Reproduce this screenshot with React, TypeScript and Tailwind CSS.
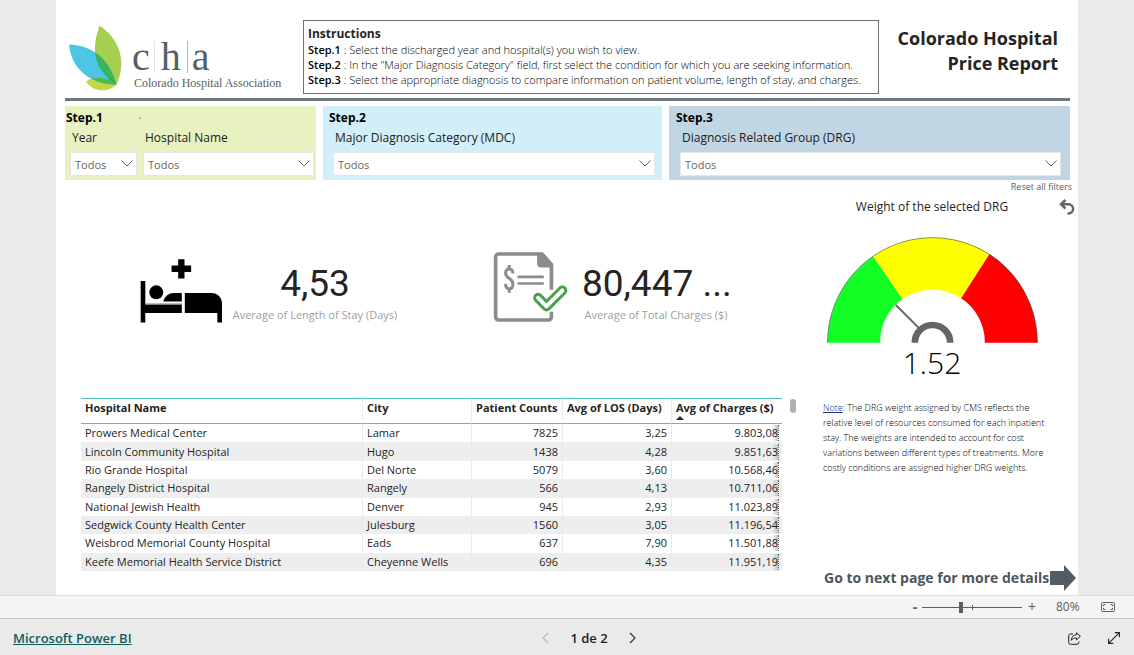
import { useState } from 'react';

interface HospitalRow {
  name: string;
  city: string;
  patients: string;
  los: string;
  charges: string;
}

const ROWS: HospitalRow[] = [
  { name: 'Prowers Medical Center', city: 'Lamar', patients: '7825', los: '3,25', charges: '9.803,08' },
  { name: 'Lincoln Community Hospital', city: 'Hugo', patients: '1438', los: '4,28', charges: '9.851,63' },
  { name: 'Rio Grande Hospital', city: 'Del Norte', patients: '5079', los: '3,60', charges: '10.568,46' },
  { name: 'Rangely District Hospital', city: 'Rangely', patients: '566', los: '4,13', charges: '10.711,06' },
  { name: 'National Jewish Health', city: 'Denver', patients: '945', los: '2,93', charges: '11.023,89' },
  { name: 'Sedgwick County Health Center', city: 'Julesburg', patients: '1560', los: '3,05', charges: '11.196,54' },
  { name: 'Weisbrod Memorial County Hospital', city: 'Eads', patients: '637', los: '7,90', charges: '11.501,88' },
  { name: 'Keefe Memorial Health Service District', city: 'Cheyenne Wells', patients: '696', los: '4,35', charges: '11.951,19' },
];

const STEPS = [
  { label: 'Step.1', text: 'Select the discharged year and hospital(s) you wish to view.' },
  { label: 'Step.2', text: 'In the "Major Diagnosis Category" field, first select the condition for which you are seeking information.' },
  { label: 'Step.3', text: 'Select the appropriate diagnosis to compare information on patient volume, length of stay, and charges.' },
];

function LeafLogo() {
  return (
    <svg viewBox="38 42 160 200" className="h-[66px] w-[53px] shrink-0" aria-hidden="true">
      <defs>
        <clipPath id="green-leaf">
          <path d="M130 44C182 76 218 146 181 224C108 172 106 112 130 44Z" />
        </clipPath>
        <clipPath id="blue-leaf">
          <path d="M38 101C108 103 162 146 181 223C108 222 44 180 38 101Z" />
        </clipPath>
      </defs>
      <path d="M130 44C182 76 218 146 181 224C108 172 106 112 130 44Z" fill="#a5cf4f" />
      <path d="M89 213C112 197 158 200 181 223C160 246 112 248 89 213Z" fill="#c0d945" />
      <path d="M38 101C108 103 162 146 181 223C108 222 44 180 38 101Z" fill="#4cc5e6" />
      <g clipPath="url(#blue-leaf)">
        <path d="M130 44C182 76 218 146 181 224C108 172 106 112 130 44Z" fill="#3bb558" />
        <path d="M89 213C112 197 158 200 181 223C160 246 112 248 89 213Z" fill="#52b848" />
      </g>
      <g clipPath="url(#green-leaf)">
        <path d="M150 203Q168 208 181 223Q172 200 150 203Z" fill="#2fa64a" />
      </g>
    </svg>
  );
}

function BedIcon() {
  return (
    <svg viewBox="31 55 250 195" className="h-[65px] w-[83px] shrink-0" aria-hidden="true">
      <path d="M146 58h19v19h20v20h-20v19h-19V97h-20V77h20z" />
      <circle cx="80" cy="158" r="21" />
      <path d="M33 124h14v71h110v25H47v29H33z" />
      <path d="M101 186Q108 160 134 160H157V186Z" />
      <path d="M166 160h82a30 30 0 0 1 30 30v59h-14v-29h-98z" />
      <path d="M47 192h110" stroke="#8a8a8a" strokeWidth="2" />
    </svg>
  );
}

function ChargesIcon() {
  return (
    <svg viewBox="38 34 226 215" className="h-[72px] w-[75px] shrink-0" fill="none" aria-hidden="true">
      <path d="M214 216v16a9 9 0 0 1-9 9H55a9 9 0 0 1-9-9V51a9 9 0 0 1 9-9h130l29 32v76" stroke="#8c8c8c" strokeWidth="11" />
      <path d="M171 38h18l30 34v11h-36q-12 0-12-12z" fill="#8c8c8c" />
      <path d="M112 111h79M112 131h79" stroke="#8c8c8c" strokeWidth="8" />
      <path
        d="M98 101c0-10-5-14-11-14s-11 4-11 13c0 17 22 14 22 33 0 9-5 14-11 14s-11-5-11-15M87 75v12M87 147v12"
        stroke="#8c8c8c"
        strokeWidth="9"
      />
      <path d="M174 174l25 26 48-48" stroke="#fff" strokeWidth="38" strokeLinecap="round" strokeLinejoin="round" />
      <path d="M174 174l25 26 48-48" stroke="#46a24a" strokeWidth="30" strokeLinecap="round" strokeLinejoin="round" />
      <path d="M174 174l25 26 48-48" stroke="#fff" strokeWidth="12" strokeLinecap="round" strokeLinejoin="round" />
    </svg>
  );
}

function Gauge() {
  return (
    <svg viewBox="50 36 632 318" className="h-[106px] w-[211px]" role="img" aria-label="Weight of the selected DRG: 1.52">
      <path d="M51 353A315 315 0 0 1 188 94L276 222A157 157 0 0 0 209 353Z" fill="#12ff26" />
      <path d="M188 94A315 315 0 0 1 537 87L452 220A157 157 0 0 0 276 222Z" fill="#ffff00" />
      <path d="M537 87A315 315 0 0 1 681 353H523A157 157 0 0 0 452 220Z" fill="#ff0000" />
      <path d="M51 353A315 315 0 0 1 681 353" fill="none" stroke="#555" strokeWidth="2" />
      <path d="M256 240L324 308" stroke="#666" strokeWidth="6" />
      <path d="M313 353A53 53 0 0 1 419 353" fill="none" stroke="#666" strokeWidth="20" />
    </svg>
  );
}

interface FilterSelectProps {
  id: string;
  label: string;
  className?: string;
}

function FilterSelect({ id, label, className }: FilterSelectProps) {
  return (
    <div className={className}>
      <label htmlFor={id} className="block pl-0.5 text-[12px] leading-4 whitespace-nowrap text-[#1c1c1c]">
        {label}
      </label>
      <div className="relative mt-1.5">
        <select
          id={id}
          className="block h-6 w-full appearance-none border border-[#e6e6e6] bg-white pt-0.5 pl-1 text-[11px] text-[#666]"
        >
          <option>Todos</option>
        </select>
        <svg viewBox="0 0 12 7" className="pointer-events-none absolute top-2 right-1 h-[7px] w-3" fill="none" stroke="#666">
          <path d="M.5.5L6 6 11.5.5" />
        </svg>
      </div>
    </div>
  );
}

export default function App() {
  const [zoom, setZoom] = useState(80);

  return (
    <div className="flex min-h-screen flex-col bg-[#eaeaea] font-['Open_Sans',sans-serif] text-[#252423]">
      <main className="mx-auto flex w-full max-w-[1022px] grow flex-col bg-white">
        <header className="mr-2 ml-[9px] flex border-b-[3px] border-[#6f787d] pt-5 pb-1 pl-1">
          <div className="flex w-[234px] shrink-0 gap-2.5 pt-[5px]">
            <LeafLogo />
            <div className="font-['Liberation_Serif',serif] text-[#565f66]">
              <div className="flex h-12 items-end text-[40px] leading-8">
                <span>c</span>
                <span className="mx-1 h-8 w-px bg-[#e4e6e7]" />
                <span className="px-0.5">h</span>
                <span className="mx-1 h-8 w-px bg-[#b4b8bb]" />
                <span>a</span>
              </div>
              <div className="pl-0.5 text-[12px] leading-[21px] whitespace-nowrap">Colorado Hospital Association</div>
            </div>
          </div>
          <section className="h-[74px] grow border border-[#6b7378] px-1 pt-1">
            <h2 className="text-[12px] leading-[17px] font-bold">Instructions</h2>
            {STEPS.map((s) => (
              <p key={s.label} className="text-[11px] leading-[15px] font-light text-black">
                <b className="font-semibold">{s.label}</b> : {s.text}
              </p>
            ))}
          </section>
          <h1 className="w-[191px] shrink-0 pt-1.5 pr-3 text-right text-[18px] leading-[25px] font-bold">
            Colorado Hospital
            <br />
            Price Report
          </h1>
        </header>

        <section className="mt-[5px] mr-2 ml-[9px] grid grid-cols-[251fr_339fr_401fr] gap-[7px] text-black">
          <div className="bg-[#e8f2c0] pt-1 pb-1">
            <div className="flex items-center pl-px text-[12px] leading-4 font-bold">
              Step.1
              <span className="ml-9 h-0.5 w-0.5 bg-[#a5cf4f]" />
            </div>
            <div className="mt-1 flex gap-1.5 pr-0.5 pl-[5px]">
              <FilterSelect id="year" label="Year" className="w-[67px]" />
              <FilterSelect id="hospital" label="Hospital Name" className="grow" />
            </div>
          </div>
          <div className="bg-[#d2eef9] pt-1 pb-1">
            <div className="pl-1.5 text-[12px] leading-4 font-bold">Step.2</div>
            <FilterSelect id="mdc" label="Major Diagnosis Category (MDC)" className="mt-1 mr-[7px] ml-2.5" />
          </div>
          <div className="bg-[#c0d6e4] pt-1 pb-1">
            <div className="pl-[7px] text-[12px] leading-4 font-bold">Step.3</div>
            <FilterSelect id="drg" label="Diagnosis Related Group (DRG)" className="mt-1 mr-[9px] ml-[11px]" />
          </div>
        </section>

        <div className="flex grow">
          <section className="grow pl-[25px]">
            <div className="flex items-end pt-[71px] pl-[59px]">
              <BedIcon />
              <div className="ml-2 w-[168px] text-center">
                <div className="font-[Roboto,sans-serif] text-[37px] leading-[46px]">4,53</div>
                <div className="text-[11px] leading-4 whitespace-nowrap text-[#a0a0a0]">Average of Length of Stay (Days)</div>
              </div>
              <div className="ml-[94px]">
                <ChargesIcon />
              </div>
              <div className="ml-3.5 w-[148px] text-center">
                <div className="font-[Roboto,sans-serif] text-[37px] leading-[46px] whitespace-nowrap">80,447 ...</div>
                <div className="text-[11px] leading-4 whitespace-nowrap text-[#a0a0a0]">Average of Total Charges ($)</div>
              </div>
            </div>

            <div className="mt-[75px] flex gap-2">
              <table className="h-[173px] w-[701px] table-fixed border-separate border-spacing-0 text-[11px] leading-4">
                <colgroup>
                  <col className="w-[282px]" />
                  <col className="w-[109px]" />
                  <col className="w-[91px]" />
                  <col className="w-[109px]" />
                  <col />
                </colgroup>
                <thead>
                  <tr className="h-[26px] text-left align-top whitespace-nowrap">
                    <th className="border-y border-r border-y-[#4bc4bc] border-r-[#eaeaea] px-1 pt-px font-bold">Hospital Name</th>
                    <th className="border-y border-r border-y-[#4bc4bc] border-r-[#eaeaea] px-1 pt-px font-bold">City</th>
                    <th className="border-y border-r border-y-[#4bc4bc] border-r-[#eaeaea] px-1 pt-px font-bold">Patient Counts</th>
                    <th className="border-y border-r border-y-[#4bc4bc] border-r-[#eaeaea] px-1 pt-px font-bold">Avg of LOS (Days)</th>
                    <th className="border-y border-y-[#4bc4bc] px-1 pt-px font-bold" aria-sort="ascending">
                      Avg of Charges ($)
                      <svg viewBox="0 0 8 4" className="h-1 w-2" fill="#252423">
                        <path d="M0 4L4 0 8 4Z" />
                      </svg>
                    </th>
                  </tr>
                </thead>
                <tbody>
                  {ROWS.map((row) => (
                    <tr key={row.name} className="even:bg-[#eeeeee]">
                      <td className="border-r border-[#eaeaea] px-1">{row.name}</td>
                      <td className="border-r border-[#eaeaea] px-1">{row.city}</td>
                      <td className="border-r border-[#eaeaea] px-1 text-right">{row.patients}</td>
                      <td className="border-r border-[#eaeaea] px-1 text-right">{row.los}</td>
                      <td className="pr-[3px] text-right">
                        <span className="inline-block border-r border-dotted border-[#666] bg-linear-to-l from-[#bfc4c6] from-0% to-transparent to-[6px]">
                          {row.charges}
                        </span>
                      </td>
                    </tr>
                  ))}
                </tbody>
              </table>
              <div className="mt-px h-3.5 w-1.5 rounded-full bg-[#b3b0ad]" />
            </div>
          </section>

          <aside className="flex w-[255px] shrink-0 flex-col">
            <button type="button" className="mr-1.5 self-end text-[9px] leading-[14px] text-[#55605f]">
              Reset all filters
            </button>
            <div className="mt-1 flex items-center">
              <h2 className="w-[218px] text-center text-[12px] leading-[18px]">Weight of the selected DRG</h2>
              <button type="button" aria-label="Back" className="ml-[18px]">
                <svg viewBox="0 0 16 16" className="h-4 w-4" fill="none" stroke="#666" strokeWidth="2.5">
                  <path d="M6.5 1L2 5.2 6.5 9.5" />
                  <path d="M2.5 5.2H9.5a4.6 4.6 0 0 1 0 9.2H8.5" />
                </svg>
              </button>
            </div>
            <div className="mt-[21px] flex w-[218px] flex-col items-center">
              <Gauge />
              <div className="text-[30px] leading-10 font-light text-black">1.52</div>
            </div>
            <p className="mt-[17px] w-[222px] text-[9px] leading-[15px] font-light text-black">
              <span className="inline-block text-[#1f2f8f] underline">Note</span>: The DRG weight assigned by CMS reflects the
              relative level of resources consumed for each inpatient stay. The weights are intended to account for cost
              variations between different types of treatments. More costly conditions are assigned higher DRG weights.
            </p>
            <button
              type="button"
              className="mt-auto mb-1 flex items-center gap-px pl-px text-[14px] leading-[18px] font-bold whitespace-nowrap text-[#4d565c]"
            >
              Go to next page for more details
              <svg viewBox="0 0 26 26" className="h-[26px] w-[26px] shrink-0" fill="#535c62">
                <path d="M0 6H14V0L26 13 14 26V20H0Z" />
              </svg>
            </button>
          </aside>
        </div>
      </main>

      <div className="flex h-6 items-center justify-end border-y border-t-[#dcdcdc] border-b-[#c8c8c8] bg-[#f5f5f5] pr-[19px] text-[#605e5c]">
        <button type="button" aria-label="Zoom out" className="w-3.5 text-[14px] leading-5 font-bold" onClick={() => setZoom(Math.max(10, zoom - 10))}>
          -
        </button>
        <div className="relative flex w-[100px] items-center">
          <input
            type="range"
            aria-label="Zoom"
            min={10}
            max={190}
            value={zoom}
            onChange={(e) => setZoom(Number(e.target.value))}
            className="h-px w-full appearance-none bg-[#605e5c] [&::-webkit-slider-thumb]:h-[11px] [&::-webkit-slider-thumb]:w-1 [&::-webkit-slider-thumb]:appearance-none [&::-webkit-slider-thumb]:bg-[#605e5c]"
          />
          <span className="absolute left-1/2 h-[5px] w-px bg-[#605e5c]" />
        </div>
        <button type="button" aria-label="Zoom in" className="w-5 text-[14px] leading-5" onClick={() => setZoom(Math.min(190, zoom + 10))}>
          +
        </button>
        <span className="ml-3.5 w-8 text-[12px] leading-5">{zoom}%</span>
        <button type="button" aria-label="Fit to page" className="ml-[13px]">
          <svg viewBox="0 0 14 10" className="h-2.5 w-3.5" fill="none" stroke="#605e5c">
            <rect x=".5" y=".5" width="13" height="9" rx="1" />
            <path d="M4.5 2.5H2.5V4M2.5 6v1.5h2M9.5 2.5h2V4M11.5 6v1.5h-2" />
          </svg>
        </button>
      </div>

      <footer className="grid h-9 grid-cols-[540fr_98px_496fr] items-center pt-0.5">
        <a href="#" className="pl-[13px] text-[13px] leading-5 font-semibold text-[#0f5e5b] underline">
          Microsoft Power BI
        </a>
        <nav className="flex items-center justify-between text-[13px] leading-5 font-semibold text-[#1c1c1c]">
          <button type="button" aria-label="Previous page" className="px-0.5">
            <svg viewBox="0 0 7 12" className="h-3 w-[7px]" fill="none" stroke="#b8b8b8" strokeWidth="1.2">
              <path d="M6 1L1 6l5 5" />
            </svg>
          </button>
          1 de 2
          <button type="button" aria-label="Next page" className="px-0.5">
            <svg viewBox="0 0 7 12" className="h-3 w-[7px]" fill="none" stroke="#333" strokeWidth="1.2">
              <path d="M1 1l5 5-5 5" />
            </svg>
          </button>
        </nav>
        <div className="flex items-center justify-end gap-[27px] pr-3.5">
          <button type="button" aria-label="Share">
            <svg viewBox="0 0 13 13" className="h-[13px] w-[13px]" fill="none" stroke="#222" strokeLinejoin="round">
              <path d="M5 2H2.5A1.8 1.8 0 0 0 .7 3.8v6.7a1.8 1.8 0 0 0 1.8 1.8h6.5a1.8 1.8 0 0 0 1.8-1.8V9.5" />
              <path d="M8.5.8L12.4 4.3 8.5 7.8V6C6 6 4.5 6.7 3.3 8.4 3.5 5 5.3 2.9 8.5 2.7Z" />
            </svg>
          </button>
          <button type="button" aria-label="Full screen">
            <svg viewBox="0 0 12 12" className="h-3 w-3" fill="none" stroke="#222" strokeWidth="1.1">
              <path d="M.8 11.2L11.2.8M6.8.6h4.6v4.6M.6 6.8v4.6h4.6" />
            </svg>
          </button>
        </div>
      </footer>
    </div>
  );
}
